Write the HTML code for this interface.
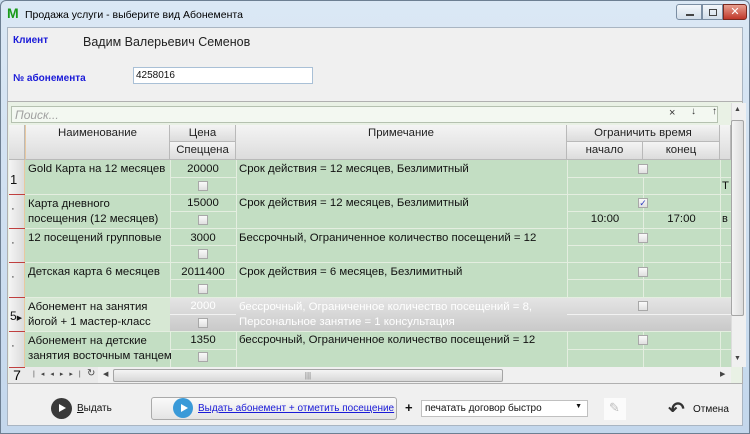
<!DOCTYPE html>
<html><head><meta charset="utf-8"><style>
*{box-sizing:border-box;margin:0;padding:0}
body{width:750px;height:434px;overflow:hidden;background:#c9dcee;font-family:"Liberation Sans","DejaVu Sans",sans-serif;position:relative}
.a{position:absolute}
.t{font-size:11.4px;color:#111;white-space:nowrap}
.hd{background:linear-gradient(#f4f4f4,#dcdcdc);border-right:1px solid #b9b9b9;border-bottom:1px solid #b9b9b9;font-size:11.4px;color:#222;text-align:center}
.cb{position:absolute;width:10px;height:10px;border:1px solid #a8a8a8;background:linear-gradient(#fafafa,#e0e0e0)}
.vl{position:absolute;width:1px;background:#e4eee0}
.hl{position:absolute;height:1px;background:#e4eee0}
</style></head><body>
<div class="a" style="left:0;top:0;width:750px;height:434px;background:linear-gradient(#dbe8f5,#c3d7ec);border:1px solid #6d7f92;border-radius:6px 6px 0 0"></div>
<div class="a" style="left:7px;top:6px;width:14px;height:14px;font-weight:bold;color:#1a9a1a;font-size:14px;line-height:14px">M</div>
<div class="a t" style="left:25px;top:9px;font-size:10.5px;color:#000">Продажа услуги - выберите вид Абонемента</div>
<div class="a" style="left:676px;top:4px;width:26px;height:16px;border:1px solid #7b8ea3;border-radius:3px 0 0 3px;background:linear-gradient(#f3f7fb,#d2deea)"><div class="a" style="left:9px;top:9px;width:8px;height:2px;background:#444"></div></div>
<div class="a" style="left:702px;top:4px;width:21px;height:16px;border:1px solid #7b8ea3;background:linear-gradient(#f3f7fb,#d2deea)"><div class="a" style="left:6px;top:4px;width:8px;height:7px;border:1px solid #444"></div></div>
<div class="a" style="left:723px;top:4px;width:24px;height:16px;border:1px solid #7a2a20;border-radius:0 3px 3px 0;background:linear-gradient(#e8a090,#c0382a);color:#fff;font-size:11px;font-weight:bold;text-align:center;line-height:14px">✕</div>
<div class="a" style="left:7px;top:27px;width:736px;height:399px;background:#f0f0f0;border:1px solid #a9b5c2"></div>
<div class="a t" style="left:13px;top:35px;font-size:10px;font-weight:bold;color:#1a1ad8">Клиент</div>
<div class="a t" style="left:83px;top:35px;font-size:12.5px;color:#222">Вадим Валерьевич Семенов</div>
<div class="a t" style="left:13px;top:73px;font-size:10px;font-weight:bold;color:#1a1ad8">№ абонемента</div>
<div class="a" style="left:133px;top:67px;width:180px;height:17px;background:#fff;border:1px solid #a9c0d6;font-size:10px;padding:2px 2px;color:#111">4258016</div>
<div class="a" style="left:7px;top:101px;width:736px;height:283px;border:1px solid #b0b0b0;background:#e9f1e5"></div>
<div class="a" style="left:11px;top:106px;width:707px;height:17px;background:#f3f8f1;border:1px solid #b5c1b0;font-size:12px;font-style:italic;color:#a0a0a0;padding:1px 3px">Поиск...</div>
<div class="a t" style="left:669px;top:107px;font-size:11px;color:#333">×</div>
<div class="a t" style="left:691px;top:106px;font-size:10px;color:#333;font-weight:bold">↓</div>
<div class="a t" style="left:712px;top:106px;font-size:10px;color:#333;font-weight:bold">↑</div>
<div class="a" style="left:731px;top:103px;width:15px;height:264px;background:#f0f0f0;border-left:1px solid #ddd"></div>
<div class="a t" style="left:734px;top:106px;font-size:7px;color:#444">▲</div>
<div class="a" style="left:731px;top:120px;width:13px;height:196px;border:1px solid #a5a5a5;border-radius:2px;background:linear-gradient(90deg,#f4f4f4,#dcdcdc)"></div>
<div class="a t" style="left:734px;top:355px;font-size:7px;color:#444">▼</div>
<div class="a hd" style="left:9px;top:125px;width:16px;height:35px"></div>
<div class="a hd" style="left:25px;top:125px;width:145px;height:35px;border-left:1px solid #e8c8a0;padding-top:2px">Наименование</div>
<div class="a hd" style="left:170px;top:125px;width:66px;height:17px;padding-top:2px">Цена</div>
<div class="a hd" style="left:170px;top:142px;width:66px;height:18px;padding-top:2px">Спеццена</div>
<div class="a hd" style="left:236px;top:125px;width:331px;height:35px;padding-top:2px">Примечание</div>
<div class="a hd" style="left:567px;top:125px;width:153px;height:17px;padding-top:2px">Ограничить время</div>
<div class="a hd" style="left:567px;top:142px;width:76px;height:18px;padding-top:2px">начало</div>
<div class="a hd" style="left:643px;top:142px;width:77px;height:18px;padding-top:2px">конец</div>
<div class="a hd" style="left:720px;top:125px;width:11px;height:35px"></div>
<div class="a" style="left:25px;top:160px;width:706px;height:207px;background:#c3dec3"></div>
<div class="a" style="left:9px;top:160px;width:16px;height:207px;background:linear-gradient(90deg,#f4f4f4,#dcdcdc);border-right:1px solid #e8c8a0"></div>
<div class="vl" style="left:170px;top:160px;height:207px"></div>
<div class="vl" style="left:236px;top:160px;height:207px"></div>
<div class="vl" style="left:567px;top:160px;height:207px"></div>
<div class="vl" style="left:643px;top:177px;height:190px"></div>
<div class="vl" style="left:720px;top:160px;height:207px"></div>
<div class="hl" style="left:25px;top:194px;width:706px"></div>
<div class="hl" style="left:25px;top:228px;width:706px"></div>
<div class="hl" style="left:25px;top:262px;width:706px"></div>
<div class="hl" style="left:25px;top:297px;width:706px"></div>
<div class="hl" style="left:25px;top:331px;width:706px"></div>
<div class="hl" style="left:170px;top:177px;width:66px"></div><div class="hl" style="left:567px;top:177px;width:164px"></div>
<div class="hl" style="left:170px;top:211px;width:66px"></div><div class="hl" style="left:567px;top:211px;width:164px"></div>
<div class="hl" style="left:170px;top:245px;width:66px"></div><div class="hl" style="left:567px;top:245px;width:164px"></div>
<div class="hl" style="left:170px;top:279px;width:66px"></div><div class="hl" style="left:567px;top:279px;width:164px"></div>
<div class="hl" style="left:170px;top:349px;width:66px"></div><div class="hl" style="left:567px;top:349px;width:164px"></div>
<div class="a" style="left:9px;top:194px;width:16px;height:1px;background:#c04040"></div>
<div class="a" style="left:9px;top:228px;width:16px;height:1px;background:#c04040"></div>
<div class="a" style="left:9px;top:262px;width:16px;height:1px;background:#c04040"></div>
<div class="a" style="left:9px;top:297px;width:16px;height:1px;background:#c04040"></div>
<div class="a" style="left:9px;top:331px;width:16px;height:1px;background:#c04040"></div>
<div class="a t" style="left:10px;top:172px;font-size:13px">1</div>
<div class="a t" style="left:11px;top:203px">·</div>
<div class="a t" style="left:11px;top:237px">·</div>
<div class="a t" style="left:11px;top:271px">·</div>
<div class="a t" style="left:11px;top:340px">·</div>
<div class="a" style="left:170px;top:298px;width:561px;height:33px;background:linear-gradient(#e4e4e4,#c9c9c9)"></div>
<div class="a" style="left:170px;top:314px;width:66px;height:1px;background:#f2f2f2"></div>
<div class="a" style="left:567px;top:314px;width:164px;height:1px;background:#f2f2f2"></div>
<div class="a" style="left:25px;top:298px;width:145px;height:33px;background:#d7e8d4"></div>
<div class="a t" style="left:10px;top:309px;font-size:12px">5<span style="font-size:7px">▶</span></div>
<div class="a t" style="left:28px;top:163px">Gold Карта на 12 месяцев</div>
<div class="a t" style="left:28px;top:197px;line-height:15px;white-space:normal;width:142px">Карта дневного посещения (12 месяцев)</div>
<div class="a t" style="left:28px;top:232px">12 посещений групповые</div>
<div class="a t" style="left:28px;top:266px">Детская карта 6 месяцев</div>
<div class="a t" style="left:28px;top:300px;line-height:15px;white-space:normal;width:142px">Абонемент на занятия йогой + 1 мастер-класс</div>
<div class="a t" style="left:28px;top:334px;line-height:15px">Абонемент на детские<br>занятия восточным танцем</div>
<div class="a t" style="left:170px;top:163px;width:66px;text-align:center">20000</div>
<div class="a t" style="left:170px;top:197px;width:66px;text-align:center">15000</div>
<div class="a t" style="left:170px;top:232px;width:66px;text-align:center">3000</div>
<div class="a t" style="left:170px;top:266px;width:66px;text-align:center">2011400</div>
<div class="a t" style="left:170px;top:300px;width:66px;text-align:center;color:#fff">2000</div>
<div class="a t" style="left:170px;top:334px;width:66px;text-align:center">1350</div>
<div class="cb" style="left:198px;top:181px"></div>
<div class="cb" style="left:198px;top:215px"></div>
<div class="cb" style="left:198px;top:249px"></div>
<div class="cb" style="left:198px;top:284px"></div>
<div class="cb" style="left:198px;top:318px"></div>
<div class="cb" style="left:198px;top:352px"></div>
<div class="a t" style="left:239px;top:163px">Срок действия = 12 месяцев, Безлимитный</div>
<div class="a t" style="left:239px;top:197px">Срок действия = 12 месяцев, Безлимитный</div>
<div class="a t" style="left:239px;top:232px">Бессрочный, Ограниченное количество посещений = 12</div>
<div class="a t" style="left:239px;top:266px">Срок действия = 6 месяцев, Безлимитный</div>
<div class="a t" style="left:239px;top:300px;color:#fff;line-height:15px">бессрочный, Ограниченное количество посещений = 8,<br>Персональное занятие = 1 консультация</div>
<div class="a t" style="left:239px;top:334px">бессрочный, Ограниченное количество посещений = 12</div>
<div class="cb" style="left:638px;top:164px"></div>
<div class="cb" style="left:638px;top:198px;font-size:9px;line-height:8px;color:#3040c0;text-align:center">✓</div>
<div class="cb" style="left:638px;top:233px"></div>
<div class="cb" style="left:638px;top:267px"></div>
<div class="cb" style="left:638px;top:301px"></div>
<div class="cb" style="left:638px;top:335px"></div>
<div class="a t" style="left:567px;top:213px;width:76px;text-align:center">10:00</div>
<div class="a t" style="left:643px;top:213px;width:77px;text-align:center">17:00</div>
<div class="a t" style="left:722px;top:180px">Т</div>
<div class="a t" style="left:722px;top:213px;font-size:11px">в</div>
<div class="a" style="left:9px;top:367px;width:16px;height:16px;background:#eaeaea;border-top:1px solid #c04040;font-size:14px;text-align:center;line-height:15px">7</div>
<div class="a" style="left:25px;top:367px;width:73px;height:16px;background:#eaeaea"></div>
<div class="a t" style="left:33px;top:370px;font-size:7px;color:#444;letter-spacing:6px">|◂◂▸▸|</div>
<div class="a t" style="left:87px;top:368px;font-size:10px;color:#444">↻</div>
<div class="a" style="left:98px;top:367px;width:633px;height:16px;background:#f0f0f0"></div>
<div class="a t" style="left:103px;top:370px;font-size:7px;color:#444">◀</div>
<div class="a" style="left:113px;top:369px;width:390px;height:13px;border:1px solid #a5a5a5;border-radius:2px;background:linear-gradient(#f4f4f4,#d8d8d8);font-size:8px;text-align:center;color:#777;line-height:11px">|||</div>
<div class="a t" style="left:720px;top:370px;font-size:7px;color:#444">▶</div>
<div class="a" style="left:51px;top:398px;width:21px;height:21px;border-radius:50%;background:#3a3a3a"><div class="a" style="left:8px;top:6px;border-left:7px solid #fff;border-top:4.5px solid transparent;border-bottom:4.5px solid transparent"></div></div>
<div class="a t" style="left:77px;top:403px;font-size:10px"><u>В</u>ыдать</div>
<div class="a" style="left:151px;top:397px;width:246px;height:23px;border:1px solid #aaa;border-radius:3px;background:linear-gradient(#fafafa,#e4e4e4)"></div>
<div class="a" style="left:173px;top:398px;width:20px;height:20px;border-radius:50%;background:#3a9ad8"><div class="a" style="left:8px;top:6px;border-left:7px solid #fff;border-top:4px solid transparent;border-bottom:4px solid transparent"></div></div>
<div class="a t" style="left:198px;top:403px;font-size:10px;color:#1a1ad8;text-decoration:underline">Выдать абонемент + отметить посещение</div>
<div class="a t" style="left:405px;top:400px;font-size:13px;font-weight:bold">+</div>
<div class="a" style="left:421px;top:400px;width:167px;height:17px;background:#fff;border:1px solid #c0c0c0;font-size:10px;padding:2px 3px;color:#111">печатать договор быстро<span style="position:absolute;right:5px;top:2px;font-size:7px">▼</span></div>
<div class="a" style="left:604px;top:398px;width:22px;height:22px;background:#fbfbfb"></div>
<div class="a t" style="left:609px;top:400px;font-size:13px;color:#bbb">✎</div>
<div class="a t" style="left:668px;top:397px;font-size:20px;font-weight:bold;color:#333">↶</div>
<div class="a t" style="left:693px;top:404px;font-size:10px">Отмена</div>
</body></html>
